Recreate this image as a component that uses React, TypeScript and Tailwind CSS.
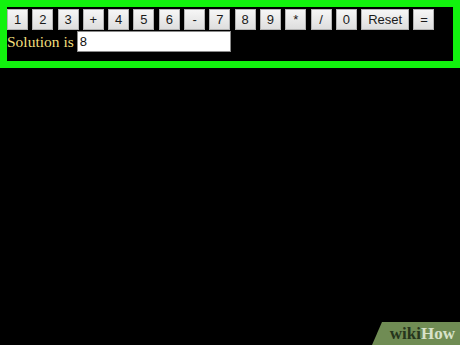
import React from "react";

const keys = ["1","2","3","+","4","5","6","-","7","8","9","*","/","0","Reset","="];

export default function App() {
  return (
    <div className="w-[460px] h-[345px] bg-black relative overflow-hidden">
      <div className="w-[460px] h-[68px] border-[7px] border-[#12f20e] bg-black">
        <div className="flex pt-[2px] gap-[4.3px]">
          {keys.map((k) => (
            <button
              key={k}
              className={`h-[21px] ${k === "Reset" ? "w-[48px]" : "w-[21px]"} border border-[#b4b4b4] bg-gradient-to-b from-[#f6f6f6] to-[#dedede] text-[13px] leading-none text-[#1a1a1a] font-['Liberation_Sans',Arial,sans-serif] flex items-center justify-center p-0`}
            >
              {k}
            </button>
          ))}
        </div>
        <div className="flex items-center mt-[1px] h-[21px]">
          <span className="text-[15.5px] text-[#f2df7c] font-['Liberation_Serif','Times_New_Roman',serif] leading-none mr-[3px]">
            Solution is
          </span>
          <input
            readOnly
            value="8"
            className="w-[154px] h-[21px] bg-white border border-[#8a8a8a] px-[2px] text-[13px] text-[#111] font-['Liberation_Sans',Arial,sans-serif] outline-none"
          />
        </div>
      </div>
      <div className="absolute right-0 bottom-0 w-[88px] h-[23px] bg-[#708c54] [clip-path:polygon(10px_0,100%_0,100%_100%,0_100%)] flex items-center justify-end pr-[5px]">
        <span className="font-['Liberation_Serif','Times_New_Roman',serif] text-[17px] font-bold leading-none">
          <span className="text-[#26351c]">wiki</span>
          <span className="text-[#d8e2ca]">How</span>
        </span>
      </div>
    </div>
  );
}
